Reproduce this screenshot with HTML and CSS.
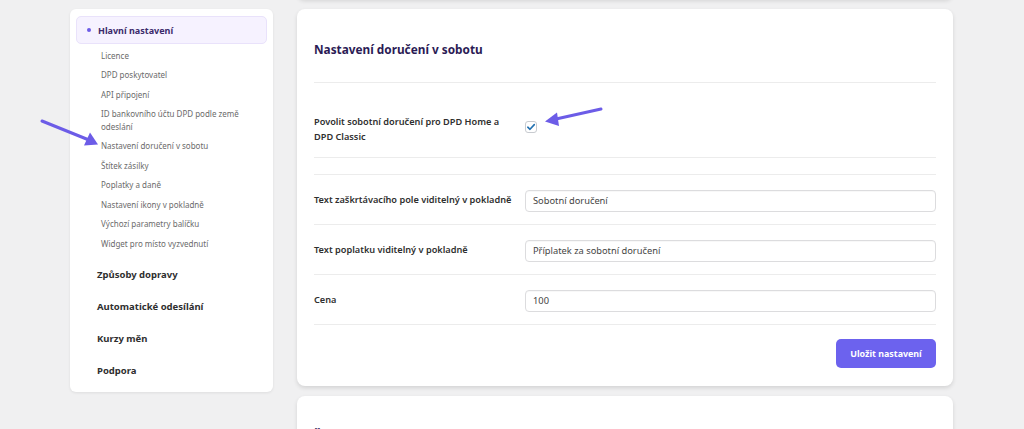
FILE: index.html
```html
<!DOCTYPE html>
<html lang="cs">
<head>
    <meta charset="UTF-8">
    <meta name="viewport" content="width=device-width, initial-scale=1.0">
    <title>DPD nastavení</title>
    <link rel="stylesheet" href="styles.css">
</head>
<body>
    <div class="page">
        <aside class="sidebar">
            <div class="nav-active"><span class="dot"></span>Hlavní nastavení</div>
            <ul class="subnav">
                <li>Licence</li>
                <li>DPD poskytovatel</li>
                <li>API připojení</li>
                <li>ID bankovního účtu DPD podle země odeslání</li>
                <li>Nastavení doručení v sobotu</li>
                <li>Štítek zásilky</li>
                <li>Poplatky a daně</li>
                <li>Nastavení ikony v pokladně</li>
                <li>Výchozí parametry balíčku</li>
                <li>Widget pro místo vyzvednutí</li>
            </ul>
            <div class="nav-item">Způsoby dopravy</div>
            <div class="nav-item">Automatické odesílání</div>
            <div class="nav-item">Kurzy měn</div>
            <div class="nav-item">Podpora</div>
        </aside>

        <main class="content">
            <section class="card card-prev"></section>

            <section class="card">
                <h2>Nastavení doručení v sobotu</h2>
                <div class="row row-tall">
                    <label>Povolit sobotní doručení pro DPD Home a DPD Classic</label>
                    <div class="field">
                        <span class="checkbox">
                            <svg width="10" height="10" viewBox="0 0 10 10"><path d="M1.8 5.2 L4 7.3 L8.3 2.6" fill="none" stroke="#2271b1" stroke-width="1.6" stroke-linecap="round" stroke-linejoin="round"/></svg>
                        </span>
                    </div>
                </div>
                <div class="spacer"></div>
                <div class="row">
                    <label>Text zaškrtávacího pole viditelný v pokladně</label>
                    <div class="field"><input type="text" value="Sobotní doručení"></div>
                </div>
                <div class="row">
                    <label>Text poplatku viditelný v pokladně</label>
                    <div class="field"><input type="text" value="Příplatek za sobotní doručení"></div>
                </div>
                <div class="row">
                    <label>Cena</label>
                    <div class="field"><input type="text" value="100"></div>
                </div>
                <div class="actions">
                    <button class="btn-save">Uložit nastavení</button>
                </div>
            </section>

            <section class="card card-next">
                <h2>Štítek zásilky</h2>
            </section>
        </main>

        <svg class="arrows" width="1024" height="429" viewBox="0 0 1024 429">
            <line x1="42" y1="121" x2="89" y2="140" stroke="#6c5ce7" stroke-width="3" stroke-linecap="round"/>
            <polygon points="98,144.5 84,145.5 90,132.5" fill="#6c5ce7"/>
            <line x1="601" y1="109" x2="556" y2="119" stroke="#6c5ce7" stroke-width="3" stroke-linecap="round"/>
            <polygon points="545,121.5 557,112.5 559,126" fill="#6c5ce7"/>
        </svg>
    </div>
</body>
</html>
```

FILE: styles.css
```css
body {
    margin: 0;
    background-color: #f0f0f1;
    font-family: "Noto Sans", "Open Sans", sans-serif;
    color: #333;
    overflow: hidden;
}
.page {
    position: relative;
    display: flex;
    align-items: flex-start;
    gap: 24px;
    padding: 9px 0 0 70px;
    height: 420px;
}

/* levý panel */
.sidebar {
    width: 191px;
    background-color: #fff;
    border-radius: 6px;
    box-shadow: 0 1px 3px rgba(0, 0, 0, 0.08);
    padding: 7px 6px 5px 6px;
}
.nav-active {
    display: flex;
    align-items: center;
    height: 26px;
    background-color: #f6f2ff;
    border: 1px solid #e9e2fb;
    border-radius: 5px;
    padding-left: 10px;
    font-size: 9px;
    font-weight: 700;
    color: #3b2a6b;
}
.dot {
    width: 4px;
    height: 4px;
    border-radius: 50%;
    background-color: #6c5ce7;
    margin-right: 7px;
}
.subnav {
    list-style: none;
    margin: 2px 0 5px 0;
    padding: 0 0 0 25px;
}
.subnav li {
    font-size: 8px;
    line-height: 12.5px;
    padding: 3.5px 0;
    color: #6b6b6b;
}
.nav-item {
    height: 32px;
    line-height: 32px;
    padding-left: 21px;
    font-size: 9.5px;
    font-weight: 700;
    color: #2f2f2f;
}

/* obsah */
.content {
    display: flex;
    flex-direction: column;
    gap: 10px;
    width: 656px;
    margin-top: -110px;
}
.card {
    background-color: #fff;
    border-radius: 8px;
    box-shadow: 0 2px 4px rgba(0, 0, 0, 0.12);
    padding: 30px 17px 18px 17px;
}
.card-prev {
    height: 100px;
    padding: 0;
}
.card h2 {
    margin: 0;
    font-size: 11.8px;
    line-height: 20px;
    font-weight: 700;
    color: #2b1b55;
    padding-bottom: 23px;
    border-bottom: 1px solid #ececec;
}
.card-next {
    padding-top: 29px;
}
.row {
    display: grid;
    grid-template-columns: 211px 1fr;
    align-items: center;
    height: 49px;
    border-bottom: 1px solid #ececec;
}
.row-tall {
    height: 75px;
    padding-top: 18px;
    box-sizing: border-box;
}
.row label {
    font-size: 9.2px;
    line-height: 15px;
    font-weight: 600;
    color: #2f2f2f;
    padding-right: 8px;
}
.spacer {
    height: 16px;
    border-bottom: 1px solid #ececec;
}
.field input {
    box-sizing: border-box;
    width: 100%;
    height: 22px;
    border: 1px solid #dcdcde;
    border-radius: 4px;
    padding: 0 7px;
    font-family: inherit;
    font-size: 9.3px;
    color: #444;
    box-shadow: inset 0 1px 1px rgba(0, 0, 0, 0.03);
}
.checkbox {
    display: flex;
    align-items: center;
    justify-content: center;
    width: 12px;
    height: 12px;
    box-sizing: border-box;
    border: 1px solid #c8cbd0;
    border-radius: 3px;
    background-color: #fff;
    margin-top: -4px;
}
.actions {
    display: flex;
    justify-content: flex-end;
    padding-top: 14px;
}
.btn-save {
    width: 100px;
    height: 29px;
    border: none;
    border-radius: 5px;
    background-color: #6c62ee;
    color: #fff;
    font-family: inherit;
    font-size: 8.9px;
    font-weight: 700;
    cursor: pointer;
}
.arrows {
    position: absolute;
    top: 0;
    left: 0;
    pointer-events: none;
}
```
